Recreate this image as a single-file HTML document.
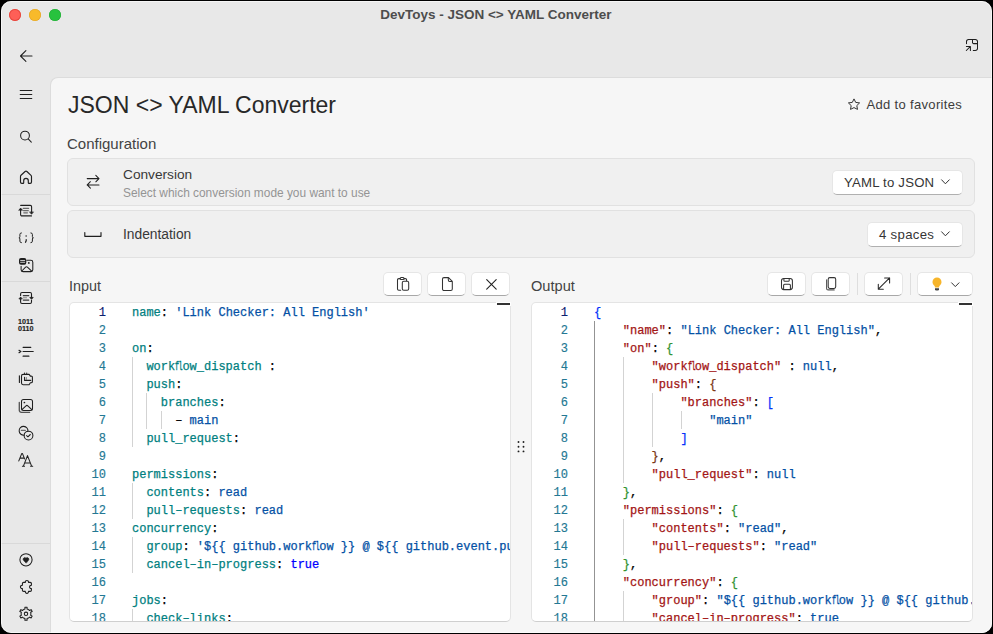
<!DOCTYPE html>
<html><head><meta charset="utf-8">
<style>
*{box-sizing:border-box;margin:0;padding:0}
html,body{width:993px;height:634px;overflow:hidden;background:#000;font-family:"Liberation Sans",sans-serif}
.win{position:absolute;left:1px;top:1px;width:991px;height:631.5px;background:#e8e8e8;border-radius:10px;overflow:hidden}
.wrap{position:absolute;left:-1px;top:-1px;width:993px;height:634px}
.a{position:absolute;white-space:nowrap}
svg{position:absolute;overflow:visible}
.tl{position:absolute;top:9px;width:12px;height:12px;border-radius:50%}
.title{position:absolute;left:-0.7px;top:1px;width:993px;text-align:center;font-weight:700;font-size:13.5px;color:#4d4d4d;line-height:27px}
.content{position:absolute;left:50px;top:77px;width:960px;height:600px;background:#f6f6f6;border-top-left-radius:8px;border-top:1px solid #dcdcdc;border-left:1px solid #dcdcdc}
.sep{position:absolute;left:1px;width:49px;height:1px;background:#d9d9d9}
.card{position:absolute;left:67px;width:908px;background:#f0f0f0;border:1px solid #e1e1e1;border-radius:6px}
.dd{position:absolute;background:#fff;border:1px solid #e6e6e6;border-bottom-color:#b0b0b0;border-radius:5px;font-size:13.5px;color:#262626;white-space:nowrap}
.btn{position:absolute;top:272px;height:24px;background:#fff;border:1px solid #e6e6e6;border-bottom-color:#a8a8a8;border-radius:5px}
.vsep{position:absolute;top:273px;width:1px;height:22px;background:#dedede}
.ed{position:absolute;top:302px;background:#fff;border:1px solid #e4e4e4;border-bottom-color:#cfcfcf;border-radius:5px;border-top-right-radius:0;overflow:hidden;height:320px}
.codewrap{position:absolute;top:0;left:0}
.cl{position:absolute;left:0;height:18px;font-family:"Liberation Mono",monospace;font-size:12px;line-height:18px;white-space:pre;color:#000;-webkit-text-stroke:0.25px currentColor}
.nl{position:absolute;right:0;height:18px;font-family:"Liberation Mono",monospace;font-size:12px;line-height:18px;white-space:pre;color:#237893;text-align:right;-webkit-text-stroke:0.15px currentColor}
.nl.cur{color:#0b216f}
.k{color:#008080}.s{color:#0451a5}.kw{color:#0000ff}
.jk{color:#a31515}.js{color:#0451a5}.n{color:#0451a5}
.b1{color:#0431fa}.b2{color:#319331}.b3{color:#7b3814}
.g{position:absolute;width:1px;background:#d3d3d3}
.lig{display:inline-block;width:7.2px;transform:scaleX(.56);transform-origin:0 50%;-webkit-text-stroke:0.45px currentColor;letter-spacing:-1px}
.ga{position:absolute;width:1px;background:#939393}
.ovr{position:absolute;top:303px;height:2px;width:13px;background:#333;box-shadow:0 0 0 1px #fff}
</style></head><body>
<div class="win"><div class="wrap">
  <div class="tl" style="left:9px;background:#fe5f57;box-shadow:inset 0 0 0 1px #e5483f"></div>
  <div class="tl" style="left:29px;background:#f8ba2a;box-shadow:inset 0 0 0 0.6px #e3a626"></div>
  <div class="tl" style="left:49px;background:#27c23e;box-shadow:inset 0 0 0 0.6px #20ad35"></div>
  <div class="title">DevToys - JSON &lt;&gt; YAML Converter</div>

  <!-- top right compact overlay icon -->
  <svg style="left:964px;top:37px" width="16" height="16" viewBox="964 37 16 16" fill="none" stroke="#1f1f1f" stroke-width="1.05" stroke-linecap="round" stroke-linejoin="round"><path d="M966.5 43.6V41.6a2.1 2.1 0 0 1 2.1-2.1H975.4a2.1 2.1 0 0 1 2.1 2.1V48.4a2.1 2.1 0 0 1-2.1 2.1H973.3"/><path d="M972.5 39.6V42.4a1.2 1.2 0 0 0 1.2 1.2H977.4"/><path d="M966.3 50.5L970.2 46.6M966.4 46.4H970.4V50.4"/></svg>

  <!-- sidebar -->
  <svg style="left:19px;top:49px" width="14" height="14" viewBox="19 49 14 14" fill="none" stroke="#222" stroke-width="1.1" stroke-linecap="round" stroke-linejoin="round"><path d="M32 56H20.6M25.9 50.6L20.5 56L25.9 61.4"/></svg>
  <svg style="left:19px;top:88px" width="14" height="12" viewBox="19 88 14 12" fill="none" stroke="#222" stroke-width="1.05" stroke-linecap="round"><path d="M20.2 90.5H31.8M20.2 94.5H31.8M20.2 98.5H31.8"/></svg>
  <svg style="left:19px;top:130px" width="14" height="14" viewBox="19 130 14 14" fill="none" stroke="#222" stroke-width="1.05" stroke-linecap="round"><circle cx="25" cy="135.6" r="4.4"/><path d="M28.2 138.9L31.3 142.2"/></svg>
  <svg style="left:19px;top:170px" width="14" height="15" viewBox="19 170 14 15" fill="none" stroke="#1f1f1f" stroke-width="1.15" stroke-linejoin="round"><path d="M25.1 171.5a1.3 1.3 0 0 1 1.8 0l4.1 3.8a1.5 1.5 0 0 1 .5 1.1V182a1.3 1.3 0 0 1-1.3 1.3H28.9a.6.6 0 0 1-.6-.6V180.7a2.3 2.3 0 0 0-4.6 0V182.7a.6.6 0 0 1-.6.6H21.8a1.3 1.3 0 0 1-1.3-1.3V176.4a1.5 1.5 0 0 1 .5-1.1z"/></svg>
  <div class="sep" style="top:194px"></div>
  <svg style="left:18px;top:204px" width="16" height="14" viewBox="18 204 16 14" fill="none" stroke="#1f1f1f" stroke-width="1.1" stroke-linecap="round" stroke-linejoin="round"><path d="M20.7 205.4H30.3a1.3 1.3 0 0 1 1.3 1.3V212.4M20.6 210V214.6a1.3 1.3 0 0 0 1.3 1.3H31.5"/><path d="M29.7 212.2L31.55 214.3L33.3 212.2ZM18.9 210.1L20.6 208L22.4 210.1Z" fill="#1f1f1f" stroke-width="0.6"/><path d="M23.3 208.4H28.6M23.5 210.6H28.3M23.8 212.8H27.4" stroke="#6a6a6a" stroke-width="1.2"/></svg>
  <svg style="left:18px;top:232px" width="16" height="12" viewBox="18 232 16 12" fill="none" stroke="#1f1f1f" stroke-width="1" stroke-linecap="round" stroke-linejoin="round"><path d="M21.4 232.9Q19.9 232.9 19.9 234.4V236.6Q19.9 237.8 18.9 237.8Q19.9 237.8 19.9 239V241.2Q19.9 242.7 21.4 242.7"/><path d="M30.9 232.9Q32.4 232.9 32.4 234.4V236.6Q32.4 237.8 33.4 237.8Q32.4 237.8 32.4 239V241.2Q32.4 242.7 30.9 242.7"/><circle cx="26.1" cy="236.1" r="0.75" fill="#1f1f1f" stroke="none"/><path d="M26.2 239.6V240.8L25.5 242.3" stroke-width="1.2"/></svg>
  <svg style="left:18px;top:257px" width="16" height="16" viewBox="18 257 16 16" fill="none" stroke="#1f1f1f" stroke-width="1.05" stroke-linecap="round" stroke-linejoin="round"><path d="M26.8 260.3H30.9a1.9 1.9 0 0 1 1.9 1.9V269.7a1.9 1.9 0 0 1-1.9 1.9H23a1.9 1.9 0 0 1-1.9-1.9V266.2"/><path d="M21.8 271L25.6 267.2a1.3 1.3 0 0 1 1.8 0L31.7 271.2"/><circle cx="28.8" cy="262.9" r="0.95" fill="#1f1f1f" stroke="none"/><rect x="19" y="258" width="7.3" height="6.8" rx="2" fill="#1f1f1f" stroke="none"/><path d="M20.6 260.5H24.7M20.6 262.3H24.7" stroke="#d8d8d8" stroke-width="0.9"/></svg>
  <div class="sep" style="top:281px"></div>
  <svg style="left:18px;top:291px" width="16" height="14" viewBox="18 291 16 14" fill="none" stroke="#1f1f1f" stroke-width="1.1" stroke-linecap="round" stroke-linejoin="round"><path d="M20.6 295.6V293.9a1.4 1.4 0 0 1 1.4-1.4H30.1a1.4 1.4 0 0 1 1.4 1.4V297.6M31.5 300.1V302.1a1.4 1.4 0 0 1-1.4 1.4H22a1.4 1.4 0 0 1-1.4-1.4V298.4"/><path d="M30.1 297.7L31.5 299.2L32.9 297.7ZM19.2 298.6L20.6 297.1L22 298.6Z" fill="#1f1f1f" stroke-width="0.9"/><path d="M23.3 295.6H28.8M23.3 300.1H28.8" stroke="#3a3a3a" stroke-width="1.1"/><path d="M23.3 297.8H26.5" stroke="#8a8a8a" stroke-width="1.1"/></svg>
  <div class="a" style="left:18px;top:318px;font-size:7.2px;font-weight:700;line-height:7.3px;color:#1f1f1f;letter-spacing:0px;-webkit-text-stroke:0.15px #1f1f1f">1011<br>0110</div>
  <svg style="left:18px;top:345px" width="17" height="13" viewBox="18 345 17 13" fill="none" stroke="#1f1f1f" stroke-width="1.2" stroke-linecap="round" stroke-linejoin="round"><path d="M19 350.3L20.9 351.5L19 352.7"/><path d="M23.1 347.3H30.8M23.1 351.5H33.2M23.1 356.2H28.9"/></svg>
  <svg style="left:18px;top:371px" width="16" height="16" viewBox="18 371 16 16" fill="none" stroke="#1f1f1f" stroke-width="1.1" stroke-linecap="round" stroke-linejoin="round"><path d="M23 374.4H29.1L30.4 376.1H31.1a1.3 1.3 0 0 1 1.3 1.3V381.5a1.3 1.3 0 0 1-1.3 1.3H30.4L29.1 384.7H23.1a1.6 1.6 0 0 1-1.6-1.6V376a1.6 1.6 0 0 1 1.6-1.6Z"/><path d="M19.4 375.7V382.4"/><path d="M24.5 373V374.2M26.7 373V374.2" stroke-width="0.9"/><path d="M24.6 377.3V380.4H30.7"/><path d="M26.5 377.5V379.6" stroke="#777" stroke-width="0.8"/></svg>
  <svg style="left:18px;top:397px" width="16" height="17" viewBox="18 397 16 17" fill="none" stroke="#1f1f1f" stroke-width="1.05" stroke-linecap="round" stroke-linejoin="round"><rect x="21.5" y="399.5" width="11" height="11" rx="2"/><path d="M22.2 409.4L26 405.8a1.3 1.3 0 0 1 1.8 0L31.8 409.6"/><circle cx="24.4" cy="402.5" r="0.85" fill="#1f1f1f" stroke="none"/><path d="M19.3 402.4V410.3a2.1 2.1 0 0 0 2.1 2.1H29.6" stroke="#555" stroke-width="1.35"/></svg>
  <svg style="left:18px;top:425px" width="16" height="16" viewBox="18 425 16 16" fill="none" stroke="#1f1f1f" stroke-width="1.05" stroke-linecap="round" stroke-linejoin="round"><path d="M24.4 435.1A4.4 4.4 0 1 1 27.9 431.5"/><path d="M21.3 430.4H25.3" stroke="#666" stroke-width="1.2"/><circle cx="28.5" cy="435.6" r="4.4"/><path d="M26.6 435.6L27.9 436.8L30.3 434.5"/></svg>
  <svg style="left:17px;top:451px" width="18" height="18" viewBox="17 451 18 18" fill="none" stroke="#1f1f1f" stroke-width="1.05" stroke-linecap="round" stroke-linejoin="round"><path d="M18.8 460.9L21.7 453.6H22.5L24.6 458.9M19.9 458.1H24.1"/><path d="M23.4 466.1L27.5 455.6L31.6 466.1M24.9 462.9H30.1M22.4 466.2H24.5M30.6 466.2H32.7"/></svg>
  <div class="sep" style="top:543px"></div>
  <svg style="left:18px;top:552px" width="16" height="16" viewBox="18 552 16 16" fill="none" stroke="#1f1f1f" stroke-width="1.05" stroke-linecap="round" stroke-linejoin="round"><circle cx="26" cy="559.8" r="6.1"/><path d="M26 562.9L23.5 560.3a1.55 1.55 0 0 1 2.5-2.1a1.55 1.55 0 0 1 2.5 2.1z" fill="#1f1f1f" stroke="#1f1f1f" stroke-width="0.6"/></svg>
  <svg style="left:18px;top:578px" width="17" height="17" viewBox="18 578 17 17" fill="none" stroke="#1f1f1f" stroke-width="1.1" stroke-linejoin="round"><path d="M23.6 582.4H25.3C25.1 579.8 28.7 579.8 28.5 582.4H30.2a1.2 1.2 0 0 1 1.2 1.2V585.3C29 585.1 29 588.7 31.4 588.5V590.2a1.2 1.2 0 0 1-1.2 1.2H28.5C28.7 594 25.1 594 25.3 591.4H23.6a1.2 1.2 0 0 1-1.2-1.2V588.5C19.8 588.7 19.8 585.1 22.4 585.3V583.6a1.2 1.2 0 0 1 1.2-1.2Z"/></svg>
  <svg style="left:18px;top:605px" width="17" height="17" viewBox="18 605 17 17" fill="none" stroke="#1f1f1f" stroke-width="1.05" stroke-linejoin="round"><path d="M23.55 609.56 L24.98 609.01 L24.90 607.29 L27.10 607.29 L27.02 609.01 L28.45 609.56 L29.64 610.52 L31.09 609.59 L32.19 611.50 L30.66 612.29 L30.90 613.80 L30.66 615.31 L32.19 616.10 L31.09 618.01 L29.64 617.08 L28.45 618.04 L27.02 618.59 L27.10 620.31 L24.90 620.31 L24.98 618.59 L23.55 618.04 L22.36 617.08 L20.91 618.01 L19.81 616.10 L21.34 615.31 L21.10 613.80 L21.34 612.29 L19.81 611.50 L20.91 609.59 L22.36 610.52Z"/><circle cx="26" cy="613.8" r="1.7"/></svg>

  <!-- content -->
  <div class="content"></div>
  <div class="a" style="left:68px;top:91px;font-size:23px;line-height:28px;color:#282828">JSON &lt;&gt; YAML Converter</div>
  <svg style="left:846px;top:96px" width="17" height="16" viewBox="846 96 17 16" fill="none" stroke="#333" stroke-width="1" stroke-linejoin="round"><path d="M854 98.9L855.7 102.4L859.6 102.9L856.8 105.6L857.5 109.4L854 107.6L850.5 109.4L851.2 105.6L848.4 102.9L852.3 102.4Z"/></svg>
  <div class="a" style="left:866.5px;top:96.5px;font-size:13px;letter-spacing:0.33px;line-height:16px;color:#3c3c3c">Add to favorites</div>
  <div class="a" style="left:67px;top:135px;font-size:15px;line-height:18px;color:#434343">Configuration</div>

  <div class="card" style="top:158px;height:48px"></div>
  <svg style="left:85px;top:173px" width="16" height="18" viewBox="85 173 16 18" fill="none" stroke="#1f1f1f" stroke-width="1.05" stroke-linecap="round" stroke-linejoin="round"><path d="M87.2 178.6H99M95.8 175.4L99 178.6L95.8 181.8"/><path d="M99 184.9H87.2M90.4 181.7L87.2 184.9L90.4 188.1"/></svg>
  <div class="a" style="left:123px;top:167px;font-size:13.7px;line-height:16px;color:#383838">Conversion</div>
  <div class="a" style="left:123px;top:185.5px;font-size:11.9px;line-height:14px;color:#949494">Select which conversion mode you want to use</div>
  <div class="dd" style="left:832px;top:170px;width:131px;height:25px"></div>
  <div class="a" style="left:844px;top:174.5px;font-size:13.2px;letter-spacing:0.2px;line-height:16px;color:#353535">YAML to JSON</div>
  <svg style="left:941px;top:179px" width="9" height="6" viewBox="0 0 9 6" fill="none" stroke="#333" stroke-width="1" stroke-linecap="round" stroke-linejoin="round"><path d="M0.6 0.8L4.4 4.8L8.3 0.8"/></svg>

  <div class="card" style="top:210px;height:48px"></div>
  <svg style="left:82px;top:228px" width="22" height="12" viewBox="82 228 22 12" fill="none" stroke="#1f1f1f" stroke-width="1.15" stroke-linecap="round" stroke-linejoin="round"><path d="M84.8 232.6V236.3H101V232.6"/></svg>
  <div class="a" style="left:123px;top:227px;font-size:13.8px;line-height:16px;color:#383838">Indentation</div>
  <div class="dd" style="left:867px;top:222px;width:96px;height:25px"></div>
  <div class="a" style="left:879px;top:226.5px;font-size:13.2px;letter-spacing:0.3px;line-height:16px;color:#353535">4 spaces</div>
  <svg style="left:941px;top:231px" width="9" height="6" viewBox="0 0 9 6" fill="none" stroke="#333" stroke-width="1" stroke-linecap="round" stroke-linejoin="round"><path d="M0.6 0.8L4.4 4.8L8.3 0.8"/></svg>

  <!-- Input header -->
  <div class="a" style="left:69px;top:278px;font-size:14.4px;line-height:16px;color:#434343">Input</div>
  <div class="btn" style="left:383px;width:39px"></div>
  <div class="btn" style="left:427px;width:39px"></div>
  <div class="btn" style="left:471px;width:39px"></div>
  <svg style="left:397px;top:277px" width="13" height="14" viewBox="0 0 13 14" fill="none" stroke="#333" stroke-width="1.05" stroke-linejoin="round" stroke-linecap="round">
    <path d="M3.1 1.6H1.8A1.3 1.3 0 0 0 .5 2.9V11.9a1.3 1.3 0 0 0 1.3 1.3H3.7"/>
    <path d="M7.1 1.6H8.3A1.3 1.3 0 0 1 9.6 2.9V3.8"/>
    <rect x="3.1" y="0.5" width="4" height="2" rx="1"/>
    <rect x="5.3" y="4.3" width="6.4" height="9" rx="1.5"/>
  </svg>
  <svg style="left:442px;top:277px" width="11" height="14" viewBox="0 0 11 14" fill="none" stroke="#333" stroke-width="1.05" stroke-linejoin="round">
    <path d="M2 0.6H6.5L10.3 4.4V12a1.5 1.5 0 0 1-1.5 1.5H2A1.5 1.5 0 0 1 .5 12V2.1A1.5 1.5 0 0 1 2 .6z"/>
    <path d="M6.3 0.8V3a1.4 1.4 0 0 0 1.4 1.4H10"/>
  </svg>
  <svg style="left:485.5px;top:278.5px" width="11" height="11" viewBox="0 0 11 11" fill="none" stroke="#222" stroke-width="1.1" stroke-linecap="round">
    <path d="M0.7 0.7L10.2 10.2M10.2 0.7L0.7 10.2"/>
  </svg>

  <!-- Output header -->
  <div class="a" style="left:531px;top:278px;font-size:14.6px;line-height:16px;color:#434343">Output</div>
  <div class="btn" style="left:767px;width:39px"></div>
  <div class="btn" style="left:811px;width:39px"></div>
  <div class="vsep" style="left:857px"></div>
  <div class="btn" style="left:864px;width:39px"></div>
  <div class="vsep" style="left:910px"></div>
  <div class="btn" style="left:917px;width:56px"></div>
  <svg style="left:779px;top:276px" width="16" height="16" viewBox="779 276 16 16" fill="none" stroke="#333" stroke-width="1.05" stroke-linejoin="round"><rect x="781.5" y="278.4" width="10.9" height="11.2" rx="2.3"/><path d="M783.9 278.6V280.4a.9.9 0 0 0 .9.9H788.3a.9.9 0 0 0 .9-.9V278.6"/><path d="M783.6 289.4V285.3a1 1 0 0 1 1-1H789.4a1 1 0 0 1 1 1V289.4"/></svg>
  <svg style="left:824px;top:276px" width="14" height="16" viewBox="824 276 14 16" fill="none" stroke="#333" stroke-width="1.05" stroke-linejoin="round" stroke-linecap="round"><rect x="828.2" y="277.6" width="7.5" height="10.8" rx="1.6"/><path d="M826.6 279.9V288.4a1.5 1.5 0 0 0 1.5 1.5H834.2" stroke="#555" stroke-width="1.1"/></svg>
  <svg style="left:876px;top:276px" width="16" height="16" viewBox="876 276 16 16" fill="none" stroke="#2a2a2a" stroke-width="1.05" stroke-linecap="round" stroke-linejoin="round"><path d="M878.3 289.2L889.6 277.9M884.6 277.9H889.6V282.9M878.3 284.2V289.2H883.3"/></svg>
  <svg style="left:932px;top:277px" width="10" height="14" viewBox="0 0 10 14" >
    <path d="M5 0.5a4.5 4.5 0 0 1 4.5 4.5c0 1.7-.9 2.7-1.7 3.6-.5.5-.7 1-.7 1.6V10.6H2.9V10.2c0-.6-.2-1.1-.7-1.6C1.4 7.7.5 6.7.5 5A4.5 4.5 0 0 1 5 .5z" fill="#f7b52a"/>
    <path d="M3 11.3H7V12.2a1.3 1.3 0 0 1-1.3 1.3H4.3A1.3 1.3 0 0 1 3 12.2z" fill="#444"/>
  </svg>
  <svg style="left:951px;top:281.5px" width="9" height="6" viewBox="0 0 9 6" fill="none" stroke="#333" stroke-width="1" stroke-linecap="round" stroke-linejoin="round"><path d="M0.6 0.8L4.3 4.6L8 0.8"/></svg>

  <!-- splitter grip -->
  <svg style="left:515px;top:438px" width="12" height="16" viewBox="515 438 12 16" fill="#1f1f1f"><circle cx="518.5" cy="442" r="0.95"/><circle cx="523.5" cy="442" r="0.95"/><circle cx="518.5" cy="446.7" r="0.95"/><circle cx="523.5" cy="446.7" r="0.95"/><circle cx="518.5" cy="451.4" r="0.95"/><circle cx="523.5" cy="451.4" r="0.95"/></svg>

  <!-- Input editor -->
  <div class="ed" style="left:69px;width:442px">
    <div style="position:absolute;left:0;top:1px;width:36px;height:330px"><div class="nl cur" style="top:0px">1</div>
<div class="nl" style="top:18px">2</div>
<div class="nl" style="top:36px">3</div>
<div class="nl" style="top:54px">4</div>
<div class="nl" style="top:72px">5</div>
<div class="nl" style="top:90px">6</div>
<div class="nl" style="top:108px">7</div>
<div class="nl" style="top:126px">8</div>
<div class="nl" style="top:144px">9</div>
<div class="nl" style="top:162px">10</div>
<div class="nl" style="top:180px">11</div>
<div class="nl" style="top:198px">12</div>
<div class="nl" style="top:216px">13</div>
<div class="nl" style="top:234px">14</div>
<div class="nl" style="top:252px">15</div>
<div class="nl" style="top:270px">16</div>
<div class="nl" style="top:288px">17</div>
<div class="nl" style="top:306px">18</div></div>
    <div class="g" style="left:62px;top:54px;height:90px"></div>
    <div class="g" style="left:76px;top:90px;height:36px"></div>
    <div class="g" style="left:91px;top:108px;height:18px"></div>
    <div class="g" style="left:62px;top:180px;height:36px"></div>
    <div class="g" style="left:62px;top:234px;height:36px"></div>
    <div class="g" style="left:62px;top:306px;height:18px"></div>
    <div style="position:absolute;left:62px;top:1px;width:380px;height:330px"><div class="cl" style="top:0px"><span class="k">name</span>: <span class="s">'Link Checker: All English'</span></div>
<div class="cl" style="top:18px"></div>
<div class="cl" style="top:36px"><span class="k">on</span>:</div>
<div class="cl" style="top:54px">  <span class="k">work<span class="lig">fl</span>ow_dispatch</span> :</div>
<div class="cl" style="top:72px">  <span class="k">push</span>:</div>
<div class="cl" style="top:90px">    <span class="k">branches</span>:</div>
<div class="cl" style="top:108px">      – <span class="s">main</span></div>
<div class="cl" style="top:126px">  <span class="k">pull_request</span>:</div>
<div class="cl" style="top:144px"></div>
<div class="cl" style="top:162px"><span class="k">permissions</span>:</div>
<div class="cl" style="top:180px">  <span class="k">contents</span>: <span class="s">read</span></div>
<div class="cl" style="top:198px">  <span class="k">pull–requests</span>: <span class="s">read</span></div>
<div class="cl" style="top:216px"><span class="k">concurrency</span>:</div>
<div class="cl" style="top:234px">  <span class="k">group</span>: <span class="s">'${{ github.work<span class="lig">fl</span>ow }} @ ${{ github.event.pull_request.head.label || github.head_ref || github.ref }}'</span></div>
<div class="cl" style="top:252px">  <span class="k">cancel–in–progress</span>: <span class="kw">true</span></div>
<div class="cl" style="top:270px"></div>
<div class="cl" style="top:288px"><span class="k">jobs</span>:</div>
<div class="cl" style="top:306px">  <span class="k">check–links</span>:</div></div>
  </div>
  <div class="ovr" style="left:497px"></div>

  <!-- Output editor -->
  <div class="ed" style="left:531px;width:442px">
    <div style="position:absolute;left:0;top:1px;width:36px;height:330px"><div class="nl cur" style="top:0px">1</div>
<div class="nl" style="top:18px">2</div>
<div class="nl" style="top:36px">3</div>
<div class="nl" style="top:54px">4</div>
<div class="nl" style="top:72px">5</div>
<div class="nl" style="top:90px">6</div>
<div class="nl" style="top:108px">7</div>
<div class="nl" style="top:126px">8</div>
<div class="nl" style="top:144px">9</div>
<div class="nl" style="top:162px">10</div>
<div class="nl" style="top:180px">11</div>
<div class="nl" style="top:198px">12</div>
<div class="nl" style="top:216px">13</div>
<div class="nl" style="top:234px">14</div>
<div class="nl" style="top:252px">15</div>
<div class="nl" style="top:270px">16</div>
<div class="nl" style="top:288px">17</div>
<div class="nl" style="top:306px">18</div></div>
    <div class="ga" style="left:62px;top:18px;height:310px"></div>
    <div class="g" style="left:91px;top:54px;height:126px"></div>
    <div class="g" style="left:120px;top:90px;height:54px"></div>
    <div class="g" style="left:149px;top:108px;height:18px"></div>
    <div class="g" style="left:91px;top:216px;height:36px"></div>
    <div class="g" style="left:91px;top:288px;height:36px"></div>
    <div style="position:absolute;left:62px;top:1px;width:380px;height:330px"><div class="cl" style="top:0px"><span class="b1">{</span></div>
<div class="cl" style="top:18px">    <span class="jk">"name"</span>: <span class="js">"Link Checker: All English"</span>,</div>
<div class="cl" style="top:36px">    <span class="jk">"on"</span>: <span class="b2">{</span></div>
<div class="cl" style="top:54px">        <span class="jk">"work<span class="lig">fl</span>ow_dispatch"</span> : <span class="n">null</span>,</div>
<div class="cl" style="top:72px">        <span class="jk">"push"</span>: <span class="b3">{</span></div>
<div class="cl" style="top:90px">            <span class="jk">"branches"</span>: <span class="b1">[</span></div>
<div class="cl" style="top:108px">                <span class="js">"main"</span></div>
<div class="cl" style="top:126px">            <span class="b1">]</span></div>
<div class="cl" style="top:144px">        <span class="b3">}</span>,</div>
<div class="cl" style="top:162px">        <span class="jk">"pull_request"</span>: <span class="n">null</span></div>
<div class="cl" style="top:180px">    <span class="b2">}</span>,</div>
<div class="cl" style="top:198px">    <span class="jk">"permissions"</span>: <span class="b2">{</span></div>
<div class="cl" style="top:216px">        <span class="jk">"contents"</span>: <span class="js">"read"</span>,</div>
<div class="cl" style="top:234px">        <span class="jk">"pull–requests"</span>: <span class="js">"read"</span></div>
<div class="cl" style="top:252px">    <span class="b2">}</span>,</div>
<div class="cl" style="top:270px">    <span class="jk">"concurrency"</span>: <span class="b2">{</span></div>
<div class="cl" style="top:288px">        <span class="jk">"group"</span>: <span class="js">"${{ github.work<span class="lig">fl</span>ow }} @ ${{ github.event.pull_request.head.label }}"</span>,</div>
<div class="cl" style="top:306px">        <span class="jk">"cancel–in–progress"</span>: <span class="n">true</span></div></div>
  </div>
  <div class="ovr" style="left:959px"></div>
</div></div>
<div style="position:absolute;left:1px;top:1px;width:991px;height:631.5px;border-radius:10px;border:1px solid rgba(255,255,255,.6);pointer-events:none"></div>
</body></html>
